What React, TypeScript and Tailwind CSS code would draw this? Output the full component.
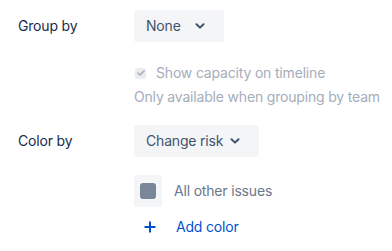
import React from 'react';

const Chevron = () => (
  <span className="flex h-6 w-6 shrink-0 items-center justify-center">
    <svg width="10" height="6" viewBox="0 0 10 6" fill="none">
      <path d="M1.5 1.2 L5 4.6 L8.5 1.2" stroke="#42526E" strokeWidth="2" strokeLinecap="round" strokeLinejoin="round" />
    </svg>
  </span>
);

const SelectButton = ({ label, width }: { label: string; width: string }) => (
  <button className={`flex h-8 items-center justify-between whitespace-nowrap rounded-[3px] bg-[#F4F5F7] pl-3 pr-3 text-[#42526E] ${width}`}>
    <span className="whitespace-nowrap">{label}</span>
    <Chevron />
  </button>
);

const App = () => {
  return (
    <div className="h-[251px] w-[392px] bg-white font-['Inter',sans-serif] text-[14px] leading-5 tracking-[-0.18px] text-[#172B4D]">
      <div className="grid grid-cols-[116px_1fr] pl-[18px] pt-[10px]">
        {/* Group by */}
        <div className="flex h-8 items-center">Group by</div>
        <div className="flex">
          <SelectButton label="None" width="w-[90px]" />
        </div>

        <div />
        <div className="mt-[21px] flex h-5 items-center gap-[10px] whitespace-nowrap text-[#A5ADBA]">
          <span className="ml-[1px] flex h-[11px] w-[11px] items-center justify-center rounded-[2px] bg-[#EBECF0]">
            <svg width="8" height="6" viewBox="0 0 8 6" fill="none">
              <path d="M1 3 L3 5 L7 1" stroke="#A5ADBA" strokeWidth="1.6" strokeLinecap="round" strokeLinejoin="round" />
            </svg>
          </span>
          <span>Show capacity on timeline</span>
        </div>

        <div />
        <div className="mt-1 h-5 whitespace-nowrap text-[#A5ADBA]">Only available when grouping by team</div>

        {/* Color by */}
        <div className="mt-[18px] flex h-8 items-center">Color by</div>
        <div className="mt-[18px] flex">
          <SelectButton label="Change risk" width="w-[125px]" />
        </div>

        <div />
        <div className="mt-[18px] flex h-8 items-center gap-3 text-[#6B778C]">
          <span className="flex h-8 w-7 items-center justify-center rounded-[3px] bg-[#F4F5F7]">
            <span className="h-4 w-4 rounded-[3px] bg-[#7A869A]" />
          </span>
          <span>All other issues</span>
        </div>

        <div />
        <div className="mt-2 flex h-6 items-center text-[#0052CC]">
          <span className="flex h-6 w-[32px] items-center justify-center">
            <svg width="12" height="12" viewBox="0 0 12 12" fill="none">
              <path d="M6 0.5 V11.5 M0.5 6 H11.5" stroke="#0052CC" strokeWidth="2" />
            </svg>
          </span>
          <span className="ml-[10px]">Add color</span>
        </div>
      </div>
    </div>
  );
};

export default App;
